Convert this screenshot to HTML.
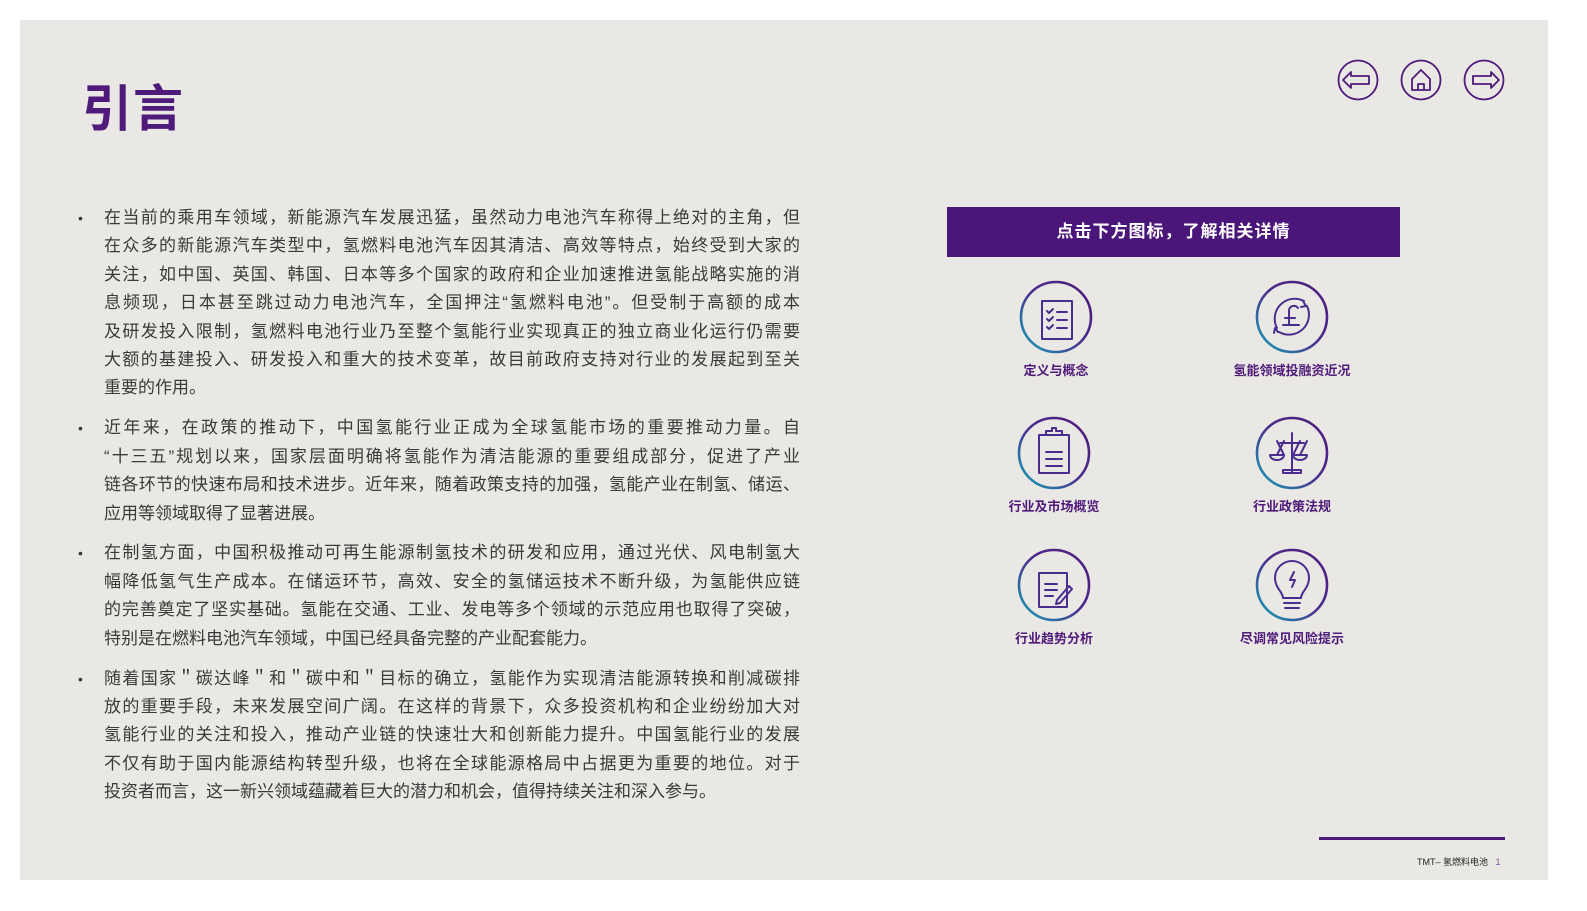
<!DOCTYPE html>
<html><head><meta charset="utf-8">
<style>
*{margin:0;padding:0;box-sizing:border-box}
body{width:1587px;height:911px;background:#fff;position:relative;overflow:hidden;font-family:"Liberation Sans","Noto Sans CJK SC",sans-serif}
.slide{position:absolute;left:20px;top:20px;width:1528px;height:860px;background:#EAE8E4}
.title{position:absolute;left:82px;top:69px;font-size:50px;font-weight:bold;color:#4f1a7a;letter-spacing:1px}
.body{position:absolute;left:104px;top:204px;width:696px;font-size:17px;color:#3a3a3a}
.p{position:relative;margin-bottom:11.6px}
.p div{height:28.4px;line-height:28.4px;text-align:justify;text-align-last:justify;white-space:nowrap}
.p div.last{text-align-last:left}
.p:before{content:"•";position:absolute;left:-26px;top:0;line-height:28.4px;font-size:14px}
.banner{position:absolute;left:947px;top:207px;width:453px;height:50px;background:#4b1679;color:#fff;font-weight:bold;font-size:17px;text-align:center;line-height:50px;letter-spacing:1px}
.lbl{position:absolute;width:200px;text-align:center;font-size:13px;font-weight:bold;color:#4f1a7a}
svg{position:absolute}
.foot{position:absolute;left:1319px;top:837px;width:186px;height:3px;background:#4f1a7a}
.ft{position:absolute;left:1417px;top:855px;font-size:9px;color:#222}
</style></head><body>
<div class="slide"></div>
<div class="title">引言</div>
<div class="body">
<div class="p"><div>在当前的乘用车领域，新能源汽车发展迅猛，虽然动力电池汽车称得上绝对的主角，但</div><div>在众多的新能源汽车类型中，氢燃料电池汽车因其清洁、高效等特点，始终受到大家的</div><div>关注，如中国、英国、韩国、日本等多个国家的政府和企业加速推进氢能战略实施的消</div><div>息频现，日本甚至跳过动力电池汽车，全国押注“氢燃料电池”。但受制于高额的成本</div><div>及研发投入限制，氢燃料电池行业乃至整个氢能行业实现真正的独立商业化运行仍需要</div><div>大额的基建投入、研发投入和重大的技术变革，故目前政府支持对行业的发展起到至关</div><div class="last">重要的作用。</div></div>
<div class="p"><div>近年来，在政策的推动下，中国氢能行业正成为全球氢能市场的重要推动力量。自</div><div>“十三五”规划以来，国家层面明确将氢能作为清洁能源的重要组成部分，促进了产业</div><div>链各环节的快速布局和技术进步。近年来，随着政策支持的加强，氢能产业在制氢、储运、</div><div class="last">应用等领域取得了显著进展。</div></div>
<div class="p"><div>在制氢方面，中国积极推动可再生能源制氢技术的研发和应用，通过光伏、风电制氢大</div><div>幅降低氢气生产成本。在储运环节，高效、安全的氢储运技术不断升级，为氢能供应链</div><div>的完善奠定了坚实基础。氢能在交通、工业、发电等多个领域的示范应用也取得了突破，</div><div class="last">特别是在燃料电池汽车领域，中国已经具备完整的产业配套能力。</div></div>
<div class="p"><div>随着国家＂碳达峰＂和＂碳中和＂目标的确立，氢能作为实现清洁能源转换和削减碳排</div><div>放的重要手段，未来发展空间广阔。在这样的背景下，众多投资机构和企业纷纷加大对</div><div>氢能行业的关注和投入，推动产业链的快速壮大和创新能力提升。中国氢能行业的发展</div><div>不仅有助于国内能源结构转型升级，也将在全球能源格局中占据更为重要的地位。对于</div><div class="last">投资者而言，这一新兴领域蕴藏着巨大的潜力和机会，值得持续关注和深入参与。</div></div>
</div>

<svg width="1587" height="911" style="left:0;top:0">
<defs><linearGradient id="g" x1="0" y1="1" x2="1" y2="0"><stop offset="0" stop-color="#12a7b8"/><stop offset="0.5" stop-color="#4a2d8e"/><stop offset="1" stop-color="#4f1a7a"/></linearGradient></defs>
<g fill="none" stroke="#4f1a7a" stroke-width="1.8" stroke-linejoin="round">
<circle cx="1358" cy="80" r="19.5"/><circle cx="1421" cy="80" r="19.5"/><circle cx="1484" cy="80" r="19.5"/>
<path d="M1343 80 L1351 72 L1351 76 L1369 76 L1369 84 L1351 84 L1351 88 Z"/>
<path d="M1412 79 L1421 70 L1430 79 L1430 90 L1412 90 Z M1418 90 L1418 84 L1424 84 L1424 90"/>
<path d="M1499 80 L1491 72 L1491 76 L1473 76 L1473 84 L1491 84 L1491 88 Z"/>
</g>
<g fill="none" stroke="url(#g)" stroke-width="2.6">
<circle cx="1056" cy="317" r="35"/><circle cx="1292" cy="317" r="35"/>
<circle cx="1054" cy="453" r="35"/><circle cx="1292" cy="453" r="35"/>
<circle cx="1054" cy="585" r="35"/><circle cx="1292" cy="585" r="35"/>
</g>
<g fill="none" stroke="#4a2d8e" stroke-width="2" stroke-linecap="round" stroke-linejoin="round">
<rect x="1042" y="301" width="30" height="38"/>
<path d="M1047 311l2 2 4-4M1047 319l2 2 4-4M1047 327l2 2 4-4M1057 312h10M1057 320h10M1057 328h10"/>
<path d="M1307 306a20 20 0 0 1-28 26M1277 328a20 20 0 0 1 27-27M1303 301l3 5-5 1M1278 332l-3-4-1 5M1298 308a5 5 0 0 0-9 2v14M1285 318h10M1283 325h16"/>
<rect x="1039" y="435" width="30" height="38"/><path d="M1046 435v-4h6v-3h4v3h6v4M1046 452h16M1046 459h16M1046 466h16"/>
<path d="M1292 433v40M1280 443h24M1284 441l-7 14M1277 441l7 14M1300 441l-7 14M1307 441l-7 14M1270 455h14a7 5 0 0 1-14 0M1293 455h14a7 5 0 0 1-14 0M1283 473h18v-3h-18z"/>
<rect x="1039" y="573" width="28" height="34"/><path d="M1045 584h12M1045 590h12M1045 596h8M1057 600l12-14 3 3-12 14-4 1z"/>
<path d="M1283 598c0-6-8-10-8-20a17 17 0 0 1 34 0c0 10-8 14-8 20zM1284 603h16M1285 608h14M1294 572l-4 8h5l-3 7"/>
</g>
</svg>
<div class="banner">点击下方图标，了解相关详情</div>
<div class="lbl" style="left:956px;top:360px">定义与概念</div>
<div class="lbl" style="left:1192px;top:360px">氢能领域投融资近况</div>
<div class="lbl" style="left:954px;top:496px">行业及市场概览</div>
<div class="lbl" style="left:1192px;top:496px">行业政策法规</div>
<div class="lbl" style="left:954px;top:628px">行业趋势分析</div>
<div class="lbl" style="left:1192px;top:628px">尽调常见风险提示</div>
<div class="foot"></div>
<div class="ft">TMT– 氢燃料电池 &nbsp; <span style="color:#7b4fa0">1</span></div>
</body></html>
